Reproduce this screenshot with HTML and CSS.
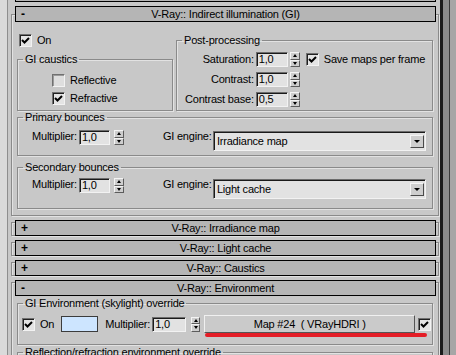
FILE: index.html
```html
<!DOCTYPE html>
<html>
  <head>
    <meta charset="utf-8" />
    <link rel="stylesheet" href="styles.css">
  </head>
  <body>
    <div class="edge"></div>

    <main class="panel">
      <div class="head head-cut"></div>

      <section class="rollout rollout-open rollout-gi">
        <div class="head"><span class="sign">-</span><span class="title">V-Ray:: Indirect illumination (GI)</span></div>

        <div class="gi-top">
          <div class="gi-left">
            <div class="check-row check-on">
              <span class="cb"><svg viewBox="0 0 11 11"><polyline points="2,5 4.5,7.5 9,3" /></svg></span>On
            </div>
            <fieldset class="group">
              <legend>GI caustics</legend>
              <div class="caustics-body">
                <div class="check-row"><span class="cb cb-off"></span>Reflective</div>
                <div class="check-row">
                  <span class="cb"><svg viewBox="0 0 11 11"><polyline points="2,5 4.5,7.5 9,3" /></svg></span>Refractive
                </div>
              </div>
            </fieldset>
          </div>

          <fieldset class="group post">
            <legend>Post-processing</legend>
            <div class="post-grid">
              <span class="lbl">Saturation:</span>
              <span class="field">1,0</span>
              <span class="spin"><i class="up"></i><i class="down"></i></span>
              <div class="check-row save">
                <span class="cb"><svg viewBox="0 0 11 11"><polyline points="2,5 4.5,7.5 9,3" /></svg></span>Save maps per frame
              </div>

              <span class="lbl">Contrast:</span>
              <span class="field">1,0</span>
              <span class="spin"><i class="up"></i><i class="down"></i></span>
              <span></span>

              <span class="lbl">Contrast base:</span>
              <span class="field">0,5</span>
              <span class="spin"><i class="up"></i><i class="down"></i></span>
              <span></span>
            </div>
          </fieldset>
        </div>

        <fieldset class="group bounces primary">
          <legend>Primary bounces</legend>
          <div class="bounce-row">
            <span class="lbl">Multiplier:</span>
            <span class="field">1,0</span>
            <span class="spin"><i class="up"></i><i class="down"></i></span>
            <span class="lbl engine">GI engine:</span>
            <div class="select"><span>Irradiance map</span><span class="drop"></span></div>
          </div>
        </fieldset>

        <fieldset class="group bounces secondary">
          <legend>Secondary bounces</legend>
          <div class="bounce-row">
            <span class="lbl">Multiplier:</span>
            <span class="field">1,0</span>
            <span class="spin"><i class="up"></i><i class="down"></i></span>
            <span class="lbl engine">GI engine:</span>
            <div class="select"><span>Light cache</span><span class="drop"></span></div>
          </div>
        </fieldset>
      </section>

      <section class="rollout">
        <div class="head"><span class="sign">+</span><span class="title">V-Ray:: Irradiance map</span></div>
      </section>
      <section class="rollout">
        <div class="head"><span class="sign">+</span><span class="title">V-Ray:: Light cache</span></div>
      </section>
      <section class="rollout">
        <div class="head"><span class="sign">+</span><span class="title">V-Ray:: Caustics</span></div>
      </section>

      <section class="rollout rollout-open rollout-env">
        <div class="head"><span class="sign">-</span><span class="title">V-Ray:: Environment</span></div>

        <fieldset class="group env">
          <legend>GI Environment (skylight) override</legend>
          <div class="env-row">
            <div class="check-row">
              <span class="cb"><svg viewBox="0 0 11 11"><polyline points="2,5 4.5,7.5 9,3" /></svg></span>On
            </div>
            <span class="swatch"></span>
            <span class="lbl env-mult">Multiplier:</span>
            <span class="field env-field">1,0</span>
            <span class="spin"><i class="up"></i><i class="down"></i></span>
            <span class="map-btn">Map #24  ( VRayHDRI )</span>
            <span class="cb map-cb"><svg viewBox="0 0 11 11"><polyline points="2,5 4.5,7.5 9,3" /></svg></span>
            <span class="mark"></span>
          </div>
        </fieldset>

        <fieldset class="group env-next">
          <legend>Reflection/refraction environment override</legend>
          <div class="env-row"></div>
        </fieldset>
      </section>
    </main>

    <div class="scroll"></div>
  </body>
</html>
```

FILE: styles.css
```css
* {
  box-sizing: border-box;
}

body {
  margin: 0;
  height: 355px;
  overflow: hidden;
  display: flex;
  background: #c8c8c8;
  color: #000;
  font: 11px/13px "Liberation Sans", Arial, sans-serif;
  letter-spacing: -0.2px;
}

.edge {
  flex: none;
  width: 8px;
  background: #dadada;
  border-right: 1px solid #8e8e8e;
}

.panel {
  flex: none;
  width: 432px;
}

.scroll {
  flex: 1;
  background: linear-gradient(to right, #1c1c1c 0 3px, #8c8c8c 3px 9px, #3a3a3a 9px 10px, #a6a6a6 10px);
}

/* rollout headers */

.head {
  display: grid;
  grid-template-columns: 1fr auto 1fr;
  align-items: center;
  height: 16px;
  padding: 0 5px;
  background: #b5b5b5;
  border: 1px solid #000;
}

.sign {
  font-weight: 700;
  font-size: 12px;
}

.title {
  grid-column: 2;
}

.head-cut {
  margin: -14px 4px 0 7px;
}

.rollout {
  margin: 6px 1px 0 3px;
  border: 1px solid #8a8a8a;
  box-shadow: inset 1px 1px 0 #e2e2e2, 1px 1px 0 #e2e2e2;
}

.rollout > .head {
  margin: -3px 2px -1px 3px;
}

.rollout-open > .head {
  margin-bottom: 0;
}

.rollout-gi {
  margin-top: 12px;
  padding-bottom: 6px;
}

.rollout-gi > .head {
  margin-top: -9px;
}

/* groups */

.group {
  margin: 0;
  padding: 0;
  min-width: 0;
  border: 1px solid #8a8a8a;
  box-shadow: inset 1px 1px 0 #e2e2e2, 1px 1px 0 #e2e2e2;
}

.group legend {
  padding: 0 2px;
  margin-left: 5px;
  line-height: 13px;
}

.check-row {
  display: flex;
  align-items: center;
  gap: 5px;
  height: 13px;
  white-space: nowrap;
}

.cb {
  flex: none;
  width: 13px;
  height: 13px;
  background: #e4e4e4;
  border: 1px solid;
  border-color: #707070 #f2f2f2 #f2f2f2 #707070;
  box-shadow: inset 1px 1px 0 #202020;
}

.cb-off {
  background: #dedede;
  box-shadow: inset 1px 1px 0 #9a9a9a;
}

.cb svg {
  display: block;
  width: 11px;
  height: 11px;
  fill: none;
  stroke: #000;
  stroke-width: 2;
}

.lbl {
  white-space: nowrap;
}

.field {
  flex: none;
  width: 32px;
  height: 15px;
  padding-left: 2px;
  background: #e2e2e2;
  border: 1px solid;
  border-color: #6c6c6c #f2f2f2 #f2f2f2 #6c6c6c;
  box-shadow: inset 1px 1px 0 #1a1a1a;
  line-height: 13px;
}

.spin {
  flex: none;
  display: flex;
  flex-direction: column;
  width: 10px;
  height: 15px;
}

.spin i {
  flex: 1;
  display: flex;
  align-items: center;
  justify-content: center;
  background: #cecece;
  border: 1px solid;
  border-color: #f4f4f4 #5c5c5c #5c5c5c #f4f4f4;
}

.spin i::after {
  content: "";
  border-left: 2px solid transparent;
  border-right: 2px solid transparent;
}

.spin .up::after {
  border-bottom: 3px solid #000;
}

.spin .down::after {
  border-top: 3px solid #000;
}

/* GI rollout */

.gi-top {
  display: flex;
  align-items: flex-end;
  gap: 3px;
  margin: 12px 5px 0 5px;
}

.gi-left {
  flex: none;
  width: 156px;
}

.check-on {
  margin: 0 0 6px 2px;
}

.caustics-body {
  display: flex;
  flex-direction: column;
  gap: 5px;
  padding: 8px 0 5px 34px;
}

.post {
  flex: 1;
}

.post-grid {
  display: grid;
  grid-template-columns: auto auto auto 1fr;
  grid-auto-rows: 15px;
  row-gap: 5px;
  align-items: center;
  padding: 5px 0 3px 8px;
}

.post-grid .lbl {
  text-align: right;
}

.post-grid .field,
.post-grid .spin {
  margin-left: 2px;
}

.save {
  margin-left: 6px;
}

.bounces {
  margin: 0 5px;
}

.bounce-row {
  display: flex;
  align-items: flex-start;
  padding: 6px 6px 4px 14px;
}

.secondary {
  margin-top: 5px;
}

.secondary .bounce-row {
  padding: 4px 6px 9px 14px;
}

.bounce-row .field {
  margin-left: 2px;
  width: 31px;
}

.bounce-row .spin {
  margin-left: 4px;
}

.engine {
  width: 50px;
  margin-left: 39px;
}

.select {
  flex: 1;
  height: 20px;
  margin-top: 1px;
  display: flex;
  align-items: center;
  justify-content: space-between;
  padding: 1px 1px 0 3px;
  background: #e2e2e2;
  border: 1px solid;
  border-color: #6c6c6c #f2f2f2 #f2f2f2 #6c6c6c;
  box-shadow: inset 1px 1px 0 #1a1a1a;
}

.drop {
  width: 14px;
  height: 13px;
  display: flex;
  align-items: center;
  justify-content: center;
  background: #cecece;
  border: 1px solid;
  border-color: #f4f4f4 #4a4a4a #4a4a4a #f4f4f4;
}

.drop::after {
  content: "";
  border-left: 3px solid transparent;
  border-right: 3px solid transparent;
  border-top: 3px solid #000;
}

/* environment rollout */

.env {
  margin: 1px 5px 0;
}

.env-row {
  position: relative;
  display: flex;
  align-items: center;
  height: 18px;
  margin: 5px 0 11px 4px;
}

.swatch {
  flex: none;
  width: 37px;
  height: 16px;
  margin-left: 7px;
  background: #cde5ff;
  border: 1px solid #3c3c3c;
}

.env-mult {
  margin-left: 7px;
}

.env-field {
  width: 34px;
  margin-left: 2px;
}

.env-row .spin {
  margin-left: 5px;
  width: 9px;
}

.map-btn {
  flex: none;
  width: 211px;
  height: 18px;
  margin-left: 4px;
  display: flex;
  align-items: center;
  justify-content: center;
  white-space: pre;
  background: #cacaca;
  border: 1px solid;
  border-color: #f0f0f0 #555 #555 #f0f0f0;
}

.map-cb {
  margin-left: 3px;
}

.mark {
  position: absolute;
  left: 183px;
  top: 18px;
  width: 222px;
  height: 4px;
  border-radius: 2px;
  background: #e41d26;
}

.env-next {
  margin: 1px 5px 0;
}
```
